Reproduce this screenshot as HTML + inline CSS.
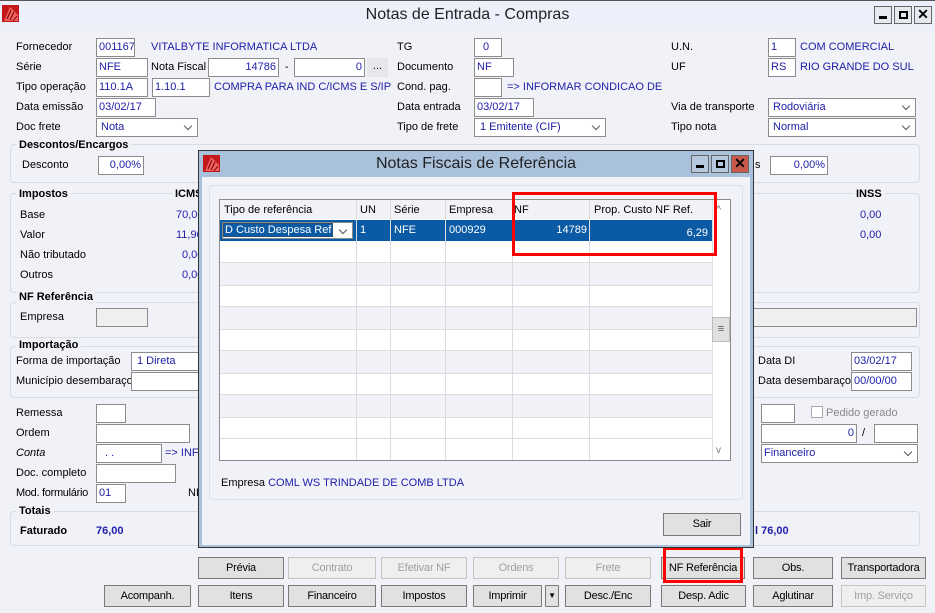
<!DOCTYPE html>
<html><head><meta charset="utf-8"><style>
*{box-sizing:border-box;margin:0;padding:0}
body{width:935px;height:613px;overflow:hidden;background:#f1f2f8;font-family:"Liberation Sans",sans-serif;font-size:11px;color:#000;position:relative}
.a{position:absolute;white-space:nowrap}
.l{position:absolute;white-space:nowrap;line-height:14px}
.b{color:#2020a8}
.i{position:absolute;background:#fff;border:1px solid #8c8c8c;height:19px;line-height:17px;padding:0 2px;color:#2020a8;white-space:nowrap;overflow:hidden}
.r{text-align:right}
.s::after{content:"";position:absolute;right:6px;top:4px;width:5px;height:5px;border-right:1.5px solid #555;border-bottom:1.5px solid #555;transform:rotate(45deg)}
.g{position:absolute;border:1px solid #d8dbe4;border-radius:4px}
.gt{position:absolute;background:#f1f2f8;font-weight:bold;padding:0 3px;line-height:14px;font-size:11px}
.bt{position:absolute;height:22px;border:1px solid #7a7a7a;background:#e1e1e1;text-align:center;line-height:20px;font-size:11px;letter-spacing:-0.2px}
.bt.d{color:#a0a0a0;border-color:#c4c4c4;background:#efefef}
.wb{position:absolute;width:18px;height:18px;border:1px solid #666;background:#e6e9f0}
.gr{position:absolute;border-right:1px solid #dcdcdc;top:0;bottom:0}
</style></head><body>
<div class="a" style="left:0;top:0;width:935px;height:30px;background:#ebf0fb;border-top:1px solid #555"></div>
<svg class="a" style="left:2px;top:5px" width="17" height="17"><rect width="17" height="17" fill="#c41818"/><path d="M2 16 L8 2 L16 10 L16 16Z" fill="#f06060"/><path d="M5 14 L9 5 M8 15 L12 7 M11 16 L15 11" stroke="#700" stroke-width="1"/></svg>
<div class="a" style="left:0;width:935px;top:6px;text-align:center;font-size:16px;color:#222">Notas de Entrada - Compras</div>
<div class="wb" style="left:874px;top:6px"><div class="a" style="left:4px;top:9px;width:8px;height:3px;background:#000"></div></div>
<div class="wb" style="left:894px;top:6px"><div class="a" style="left:4px;top:4px;width:9px;height:8px;border:2px solid #000"></div></div>
<div class="wb" style="left:914px;top:6px;font-weight:bold;text-align:center;line-height:15px;font-size:14px">✕</div>

<div class="l" style="left:16px;top:40px">Fornecedor</div>
<div class="i" style="left:96px;top:38px;width:39px">001167</div>
<div class="l b" style="left:151px;top:40px">VITALBYTE INFORMATICA LTDA</div>
<div class="l" style="left:16px;top:60px">Série</div>
<div class="i" style="left:96px;top:58px;width:52px">NFE</div>
<div class="l" style="left:151px;top:60px">Nota Fiscal</div>
<div class="i r" style="left:208px;top:58px;width:71px">14786</div>
<div class="l" style="left:285px;top:60px">-</div>
<div class="i r" style="left:294px;top:58px;width:71px">0</div>
<div class="a" style="left:367px;top:58px;width:21px;height:19px;background:#e6e7ec;text-align:center;line-height:16px">...</div>
<div class="l" style="left:16px;top:80px">Tipo operação</div>
<div class="i" style="left:96px;top:78px;width:52px">110.1A</div>
<div class="i" style="left:152px;top:78px;width:58px">1.10.1</div>
<div class="a b" style="left:214px;top:80px;width:178px;overflow:hidden;line-height:14px">COMPRA PARA IND C/ICMS E S/IPI (</div>
<div class="l" style="left:16px;top:100px">Data emissão</div>
<div class="i" style="left:96px;top:98px;width:60px">03/02/17</div>
<div class="l" style="left:16px;top:120px">Doc frete</div>
<div class="i s" style="left:96px;top:118px;width:102px;padding-left:4px">Nota</div>

<div class="l" style="left:397px;top:40px">TG</div>
<div class="i" style="left:474px;top:38px;width:28px;padding-left:8px">0</div>
<div class="l" style="left:397px;top:60px">Documento</div>
<div class="i" style="left:474px;top:58px;width:40px">NF</div>
<div class="l" style="left:397px;top:80px">Cond. pag.</div>
<div class="i" style="left:474px;top:78px;width:28px"></div>
<div class="a b" style="left:507px;top:80px;width:159px;overflow:hidden;line-height:14px">=&gt; INFORMAR CONDICAO DE PAGTO</div>
<div class="l" style="left:397px;top:100px">Data entrada</div>
<div class="i" style="left:474px;top:98px;width:60px">03/02/17</div>
<div class="l" style="left:397px;top:120px">Tipo de frete</div>
<div class="i s" style="left:474px;top:118px;width:132px;padding-left:5px">1 Emitente (CIF)</div>

<div class="l" style="left:671px;top:40px">U.N.</div>
<div class="i" style="left:768px;top:38px;width:28px">1</div>
<div class="l b" style="left:800px;top:40px">COM COMERCIAL</div>
<div class="l" style="left:671px;top:60px">UF</div>
<div class="i" style="left:768px;top:58px;width:28px">RS</div>
<div class="l b" style="left:800px;top:60px">RIO GRANDE DO SUL</div>
<div class="l" style="left:671px;top:100px">Via de transporte</div>
<div class="i s" style="left:768px;top:98px;width:148px;padding-left:4px">Rodoviária</div>
<div class="l" style="left:671px;top:120px">Tipo nota</div>
<div class="i s" style="left:768px;top:118px;width:148px;padding-left:4px">Normal</div>

<div class="g" style="left:10px;top:144px;width:910px;height:39px"></div>
<div class="gt" style="left:16px;top:138px">Descontos/Encargos</div>
<div class="l" style="left:22px;top:158px">Desconto</div>
<div class="i r" style="left:98px;top:156px;width:46px">0,00%</div>
<div class="l" style="left:755px;top:158px">s</div>
<div class="i r" style="left:770px;top:156px;width:58px">0,00%</div>

<div class="g" style="left:10px;top:193px;width:910px;height:100px"></div>
<div class="gt" style="left:16px;top:187px">Impostos</div>
<div class="gt" style="left:172px;top:187px">ICMS</div>
<div class="gt" style="left:853px;top:187px">INSS</div>
<div class="l" style="left:20px;top:208px">Base</div><div class="l b" style="left:176px;top:208px">70,00</div>
<div class="l" style="left:20px;top:228px">Valor</div><div class="l b" style="left:176px;top:228px">11,90</div>
<div class="l" style="left:20px;top:248px">Não tributado</div><div class="l b" style="left:182px;top:248px">0,00</div>
<div class="l" style="left:20px;top:268px">Outros</div><div class="l b" style="left:182px;top:268px">0,00</div>
<div class="l b" style="left:860px;top:208px">0,00</div>
<div class="l b" style="left:860px;top:228px">0,00</div>

<div class="g" style="left:10px;top:302px;width:910px;height:36px"></div>
<div class="gt" style="left:16px;top:290px">NF Referência</div>
<div class="l" style="left:20px;top:310px">Empresa</div>
<div class="i" style="left:96px;top:308px;width:52px;background:#efefef"></div>
<div class="i" style="left:740px;top:308px;width:177px;background:#efefef"></div>

<div class="g" style="left:10px;top:346px;width:910px;height:52px"></div>
<div class="gt" style="left:16px;top:338px">Importação</div>
<div class="l" style="left:16px;top:354px">Forma de importação</div>
<div class="i" style="left:131px;top:352px;width:80px;padding-left:5px">1 Direta</div>
<div class="l" style="left:16px;top:374px">Município desembaraço</div>
<div class="i" style="left:131px;top:372px;width:80px"></div>
<div class="l" style="left:758px;top:354px">Data DI</div>
<div class="i" style="left:851px;top:352px;width:61px">03/02/17</div>
<div class="l" style="left:758px;top:374px">Data desembaraço</div>
<div class="i" style="left:851px;top:372px;width:61px">00/00/00</div>

<div class="l" style="left:16px;top:406px">Remessa</div>
<div class="i" style="left:96px;top:404px;width:30px"></div>
<div class="l" style="left:16px;top:426px">Ordem</div>
<div class="i" style="left:96px;top:424px;width:94px"></div>
<div class="l" style="left:16px;top:446px;font-style:italic">Conta</div>
<div class="i" style="left:96px;top:444px;width:66px;padding-left:8px">. .</div>
<div class="l b" style="left:165px;top:446px">=&gt; INFORMAR</div>
<div class="l" style="left:16px;top:466px">Doc. completo</div>
<div class="i" style="left:96px;top:464px;width:80px"></div>
<div class="l" style="left:16px;top:486px;letter-spacing:-0.3px">Mod. formulário</div>
<div class="i" style="left:96px;top:484px;width:30px">01</div>
<div class="l" style="left:188px;top:486px">NF</div>
<div class="i" style="left:761px;top:404px;width:34px"></div>
<div class="a" style="left:811px;top:406px;width:12px;height:12px;border:1px solid #aaa;background:#fff"></div>
<div class="l" style="left:826px;top:406px;color:#888">Pedido gerado</div>
<div class="i r" style="left:761px;top:424px;width:96px">0</div>
<div class="l" style="left:862px;top:426px">/</div>
<div class="i" style="left:874px;top:424px;width:44px"></div>
<div class="i s" style="left:761px;top:444px;width:157px">Financeiro</div>

<div class="g" style="left:10px;top:511px;width:910px;height:35px"></div>
<div class="gt" style="left:16px;top:504px">Totais</div>
<div class="l" style="left:20px;top:524px;font-weight:bold">Faturado</div>
<div class="l b" style="left:96px;top:524px;font-weight:bold">76,00</div>
<div class="l b" style="left:755px;top:524px;font-weight:bold">l 76,00</div>

<div class="bt" style="left:198px;top:557px;width:86px">Prévia</div>
<div class="bt d" style="left:288px;top:557px;width:88px">Contrato</div>
<div class="bt d" style="left:381px;top:557px;width:86px">Efetivar NF</div>
<div class="bt d" style="left:473px;top:557px;width:86px">Ordens</div>
<div class="bt d" style="left:565px;top:557px;width:86px">Frete</div>
<div class="bt" style="left:661px;top:557px;width:84px">NF Referência</div>
<div class="bt" style="left:753px;top:557px;width:80px">Obs.</div>
<div class="bt" style="left:841px;top:557px;width:85px">Transportadora</div>
<div class="bt" style="left:104px;top:585px;width:87px">Acompanh.</div>
<div class="bt" style="left:198px;top:585px;width:86px">Itens</div>
<div class="bt" style="left:288px;top:585px;width:88px">Financeiro</div>
<div class="bt" style="left:381px;top:585px;width:86px">Impostos</div>
<div class="bt" style="left:473px;top:585px;width:69px">Imprimir</div>
<div class="bt" style="left:545px;top:585px;width:14px;font-size:8px">▼</div>
<div class="bt" style="left:565px;top:585px;width:86px">Desc./Enc</div>
<div class="bt" style="left:661px;top:585px;width:85px">Desp. Adic</div>
<div class="bt" style="left:753px;top:585px;width:80px">Aglutinar</div>
<div class="bt d" style="left:841px;top:585px;width:85px">Imp. Serviço</div>
<div class="a" style="left:663px;top:547px;width:80px;height:36px;border:3px solid #f00"></div>

<div class="a" style="left:198px;top:150px;width:556px;height:398px;background:#a9c1db;border:1px solid #333"></div>
<svg class="a" style="left:203px;top:155px" width="17" height="17"><rect width="17" height="17" fill="#c41818"/><path d="M2 16 L8 2 L16 10 L16 16Z" fill="#f06060"/><path d="M5 14 L9 5 M8 15 L12 7 M11 16 L15 11" stroke="#700" stroke-width="1"/></svg>
<div class="a" style="left:198px;width:556px;top:155px;text-align:center;font-size:16px;color:#222">Notas Fiscais de Referência</div>
<div class="wb" style="left:691px;top:155px;background:#b6c8de"><div class="a" style="left:4px;top:9px;width:8px;height:3px;background:#000"></div></div>
<div class="wb" style="left:711px;top:155px;background:#b6c8de"><div class="a" style="left:4px;top:4px;width:9px;height:8px;border:2px solid #000"></div></div>
<div class="wb" style="left:731px;top:155px;background:#c9594a;font-weight:bold;text-align:center;line-height:15px;font-size:14px">✕</div>
<div class="a" style="left:202px;top:177px;width:548px;height:368px;background:#f1f2f8"></div>
<div class="g" style="left:209px;top:185px;width:534px;height:315px;border-color:#dde0e8"></div>
<div class="a" style="left:219px;top:199px;width:512px;height:262px;background:#fff;border:1px solid #8c8c8c;overflow:hidden">
 <div class="a" style="left:0;top:0;width:492px;height:19px;background:#f1f2f8"></div>
 <div class="a" style="left:0;top:20px;width:492px;height:21px;background:#0a5aa5"></div>
 <div class="a" style="left:0;top:63px;width:492px;height:22px;background:#f1f2f8"></div>
 <div class="a" style="left:0;top:107px;width:492px;height:22px;background:#f1f2f8"></div>
 <div class="a" style="left:0;top:151px;width:492px;height:22px;background:#f1f2f8"></div>
 <div class="a" style="left:0;top:195px;width:492px;height:22px;background:#f1f2f8"></div>
 <div class="a" style="left:0;top:41px;width:492px;height:22px;border-bottom:1px solid #dcdcdc"></div>
 <div class="a" style="left:0;top:85px;width:492px;height:22px;border-bottom:1px solid #dcdcdc;border-top:1px solid #dcdcdc"></div>
 <div class="a" style="left:0;top:129px;width:492px;height:22px;border-bottom:1px solid #dcdcdc;border-top:1px solid #dcdcdc"></div>
 <div class="a" style="left:0;top:173px;width:492px;height:22px;border-bottom:1px solid #dcdcdc;border-top:1px solid #dcdcdc"></div>
 <div class="a" style="left:0;top:217px;width:492px;height:22px;border-bottom:1px solid #dcdcdc;border-top:1px solid #dcdcdc"></div>
 <div class="gr" style="left:136px"></div><div class="gr" style="left:170px"></div><div class="gr" style="left:225px"></div><div class="gr" style="left:292px"></div><div class="gr" style="left:369px"></div><div class="gr" style="left:492px"></div>
 <div class="l" style="left:4px;top:3px">Tipo de referência</div>
 <div class="l" style="left:140px;top:3px">UN</div>
 <div class="l" style="left:174px;top:3px">Série</div>
 <div class="l" style="left:229px;top:3px">Empresa</div>
 <div class="l" style="left:294px;top:3px">NF</div>
 <div class="l" style="left:374px;top:3px">Prop. Custo NF Ref.</div>
 <div class="i s" style="left:2px;top:22px;width:131px;height:17px;line-height:15px;color:#fff;padding:0"><span style="background:#0a5aa5;border:1px dotted #444;padding:0 1px">D Custo Despesa Ref</span></div>
 <div class="l" style="left:140px;top:23px;color:#fff">1</div>
 <div class="l" style="left:174px;top:23px;color:#fff">NFE</div>
 <div class="l" style="left:229px;top:23px;color:#fff">000929</div>
 <div class="l r" style="left:292px;width:75px;top:23px;color:#fff">14789</div>
 <div class="l r" style="left:370px;width:118px;top:26px;color:#fff">6,29</div>
 <div class="a" style="left:492px;top:0;width:18px;height:260px;background:#fff;border-left:1px solid #e0e0e0"></div>
 <div class="l" style="left:496px;top:3px;color:#777">^</div>
 <div class="a" style="left:492px;top:117px;width:18px;height:25px;background:#e0e0e0;border:1px solid #bbb;text-align:center;line-height:22px;color:#555">≡</div>
 <div class="l" style="left:496px;top:244px;color:#777;font-size:10px">v</div>
</div>
<div class="l" style="left:221px;top:476px">Empresa <span class="b">COML WS TRINDADE DE COMB LTDA</span></div>
<div class="bt" style="left:663px;top:513px;width:78px;height:23px">Sair</div>
<div class="a" style="left:512px;top:192px;width:205px;height:64px;border:3px solid #f00"></div>
</body></html>
